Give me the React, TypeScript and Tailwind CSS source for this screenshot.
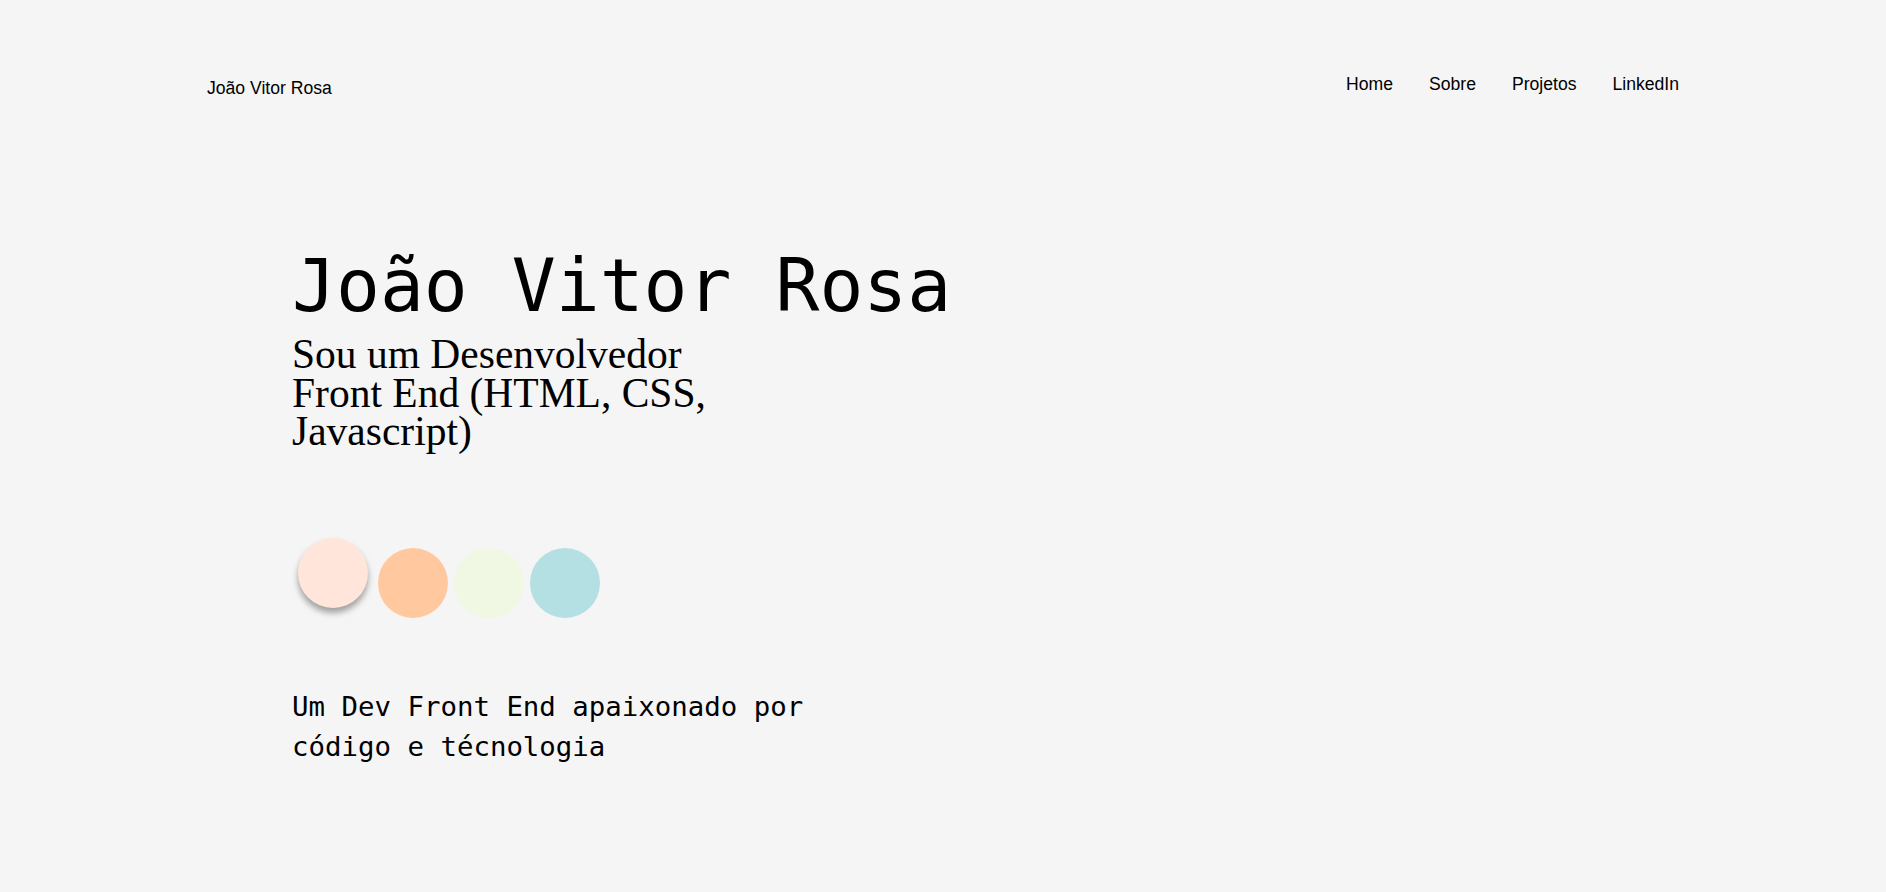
import React from 'react';

const navLinks = ['Home', 'Sobre', 'Projetos', 'LinkedIn'];

const swatches = [
  { id: 'peach', className: 'bg-[#ffe5da] -translate-x-1 -translate-y-2.5 shadow-[0_5px_6px_rgba(0,0,0,0.35)]' },
  { id: 'orange', className: 'bg-[#ffc89e]' },
  { id: 'lime', className: 'bg-[#f0f7e2]' },
  { id: 'teal', className: 'bg-[#b4dfe3]' },
];

export default function App() {
  return (
    <div className="min-h-screen bg-[#f5f5f5] text-black">
      <div className="px-[207px]">
        {/* Header */}
        <header className="flex items-start justify-between pt-[74px] font-['Liberation_Sans',Arial,sans-serif] text-[17.6px] leading-[20px]">
          <a href="#" className="mt-1 block">João Vitor Rosa</a>
          <nav className="flex items-center gap-[36px]">
            {navLinks.map(link => (
              <a key={link} href="#" className="block">
                {link}
              </a>
            ))}
          </nav>
        </header>

        {/* Hero */}
        <main className="pl-[85px] pt-[148px]">
          <h1 className="font-['DejaVu_Sans_Mono',monospace] text-[73px] font-normal leading-[80px]">
            João Vitor Rosa
          </h1>
          <p className="mt-[9px] w-[430px] font-['Liberation_Serif','Times_New_Roman',serif] text-[41.5px] leading-[38.5px]">
            Sou um Desenvolvedor Front End (HTML, CSS, Javascript)
          </p>

          <div className="ml-[10px] mt-[97px] flex gap-[6px]">
            {swatches.map(s => (
              <div key={s.id} className={`h-[70px] w-[70px] rounded-full ${s.className}`} />
            ))}
          </div>

          <p className="mt-[69px] w-[560px] font-['DejaVu_Sans_Mono',monospace] text-[27.4px] leading-[40px]">
            Um Dev Front End apaixonado por código e técnologia
          </p>
        </main>
      </div>
    </div>
  );
}
